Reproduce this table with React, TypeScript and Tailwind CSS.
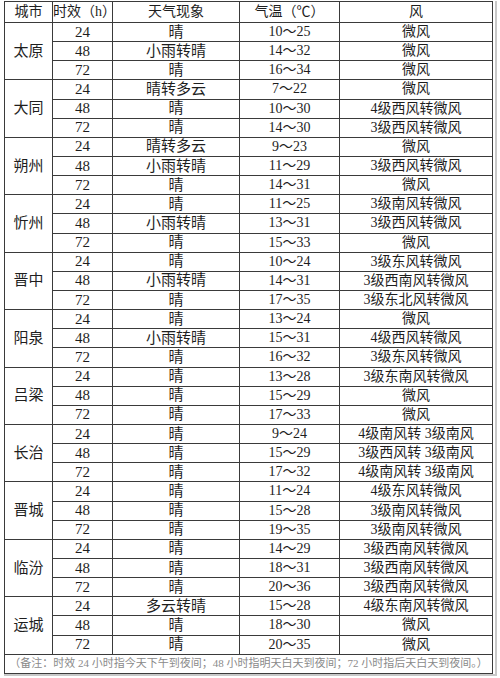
import React from 'react'

type Row = [string, string, string, string]

type City = { name: string; rows: Row[] }

const CITIES: City[] = [
  { name: '太原', rows: [['24', '晴', '10～25', '微风'], ['48', '小雨转晴', '14～32', '微风'], ['72', '晴', '16～34', '微风']] },
  { name: '大同', rows: [['24', '晴转多云', '7～22', '微风'], ['48', '晴', '10～30', '4级西风转微风'], ['72', '晴', '14～30', '3级西风转微风']] },
  { name: '朔州', rows: [['24', '晴转多云', '9～23', '微风'], ['48', '小雨转晴', '11～29', '3级西风转微风'], ['72', '晴', '14～31', '微风']] },
  { name: '忻州', rows: [['24', '晴', '11～25', '3级南风转微风'], ['48', '小雨转晴', '13～31', '3级西风转微风'], ['72', '晴', '15～33', '微风']] },
  { name: '晋中', rows: [['24', '晴', '10～24', '3级东风转微风'], ['48', '小雨转晴', '14～31', '3级西南风转微风'], ['72', '晴', '17～35', '3级东北风转微风']] },
  { name: '阳泉', rows: [['24', '晴', '13～24', '微风'], ['48', '小雨转晴', '15～31', '4级西风转微风'], ['72', '晴', '16～32', '3级东风转微风']] },
  { name: '吕梁', rows: [['24', '晴', '13～28', '3级东南风转微风'], ['48', '晴', '15～29', '微风'], ['72', '晴', '17～33', '微风']] },
  { name: '长治', rows: [['24', '晴', '9～24', '4级南风转 3级南风'], ['48', '晴', '15～29', '3级西风转 3级南风'], ['72', '晴', '17～32', '4级南风转 3级南风']] },
  { name: '晋城', rows: [['24', '晴', '11～24', '4级东风转微风'], ['48', '晴', '15～28', '3级南风转微风'], ['72', '晴', '19～35', '3级南风转微风']] },
  { name: '临汾', rows: [['24', '晴', '14～29', '3级西南风转微风'], ['48', '晴', '18～31', '3级西南风转微风'], ['72', '晴', '20～36', '3级西南风转微风']] },
  { name: '运城', rows: [['24', '多云转晴', '15～28', '4级东南风转微风'], ['48', '晴', '18～30', '微风'], ['72', '晴', '20～35', '微风']] },
]

const cell = 'border border-[#3a3a3a] text-center align-middle p-0 leading-none'

export default function App() {
  return (
    <div className="w-[500px] h-[678px] bg-white pl-[4px] pr-[3px] pt-[1px]">
      <div
        className="border-r-[2px] border-b-[2px] border-[#c8c8c8]"
        style={{ fontFamily: '"Liberation Serif", "Noto Sans CJK SC", serif' }}
      >
        <table className="w-[488px] table-fixed border-collapse text-[#1e1e1e] text-[14px]">
          <colgroup>
            <col className="w-[48px]" />
            <col className="w-[60px]" />
            <col className="w-[127px]" />
            <col className="w-[100px]" />
            <col className="w-[153px]" />
          </colgroup>
          <thead>
            <tr className="h-[21px]">
              <th className={`${cell} font-normal`}>城市</th>
              <th className={`${cell} font-normal`}>时效（h）</th>
              <th className={`${cell} font-normal`}>天气现象</th>
              <th className={`${cell} font-normal`}>气温（℃）</th>
              <th className={`${cell} font-normal`}>风</th>
            </tr>
          </thead>
          <tbody>
            {CITIES.map((c) =>
              c.rows.map((r, i) => (
                <tr key={c.name + i} className="h-[19.15px]">
                  {i === 0 && (
                    <td rowSpan={3} className={`${cell} text-[15px]`}>
                      {c.name}
                    </td>
                  )}
                  <td className={`${cell} text-[15px]`}>{r[0]}</td>
                  <td className={`${cell} text-[15px]`}>{r[1]}</td>
                  <td className={cell}>{r[2]}</td>
                  <td className={cell}>{r[3]}</td>
                </tr>
              )),
            )}
            <tr className="h-[19px]">
              <td colSpan={5} className={`${cell} text-[11px] text-[#8a8a8a] whitespace-nowrap`}>
                （备注：时效 24 小时指今天下午到夜间；48 小时指明天白天到夜间；72 小时指后天白天到夜间。）
              </td>
            </tr>
          </tbody>
        </table>
      </div>
    </div>
  )
}
